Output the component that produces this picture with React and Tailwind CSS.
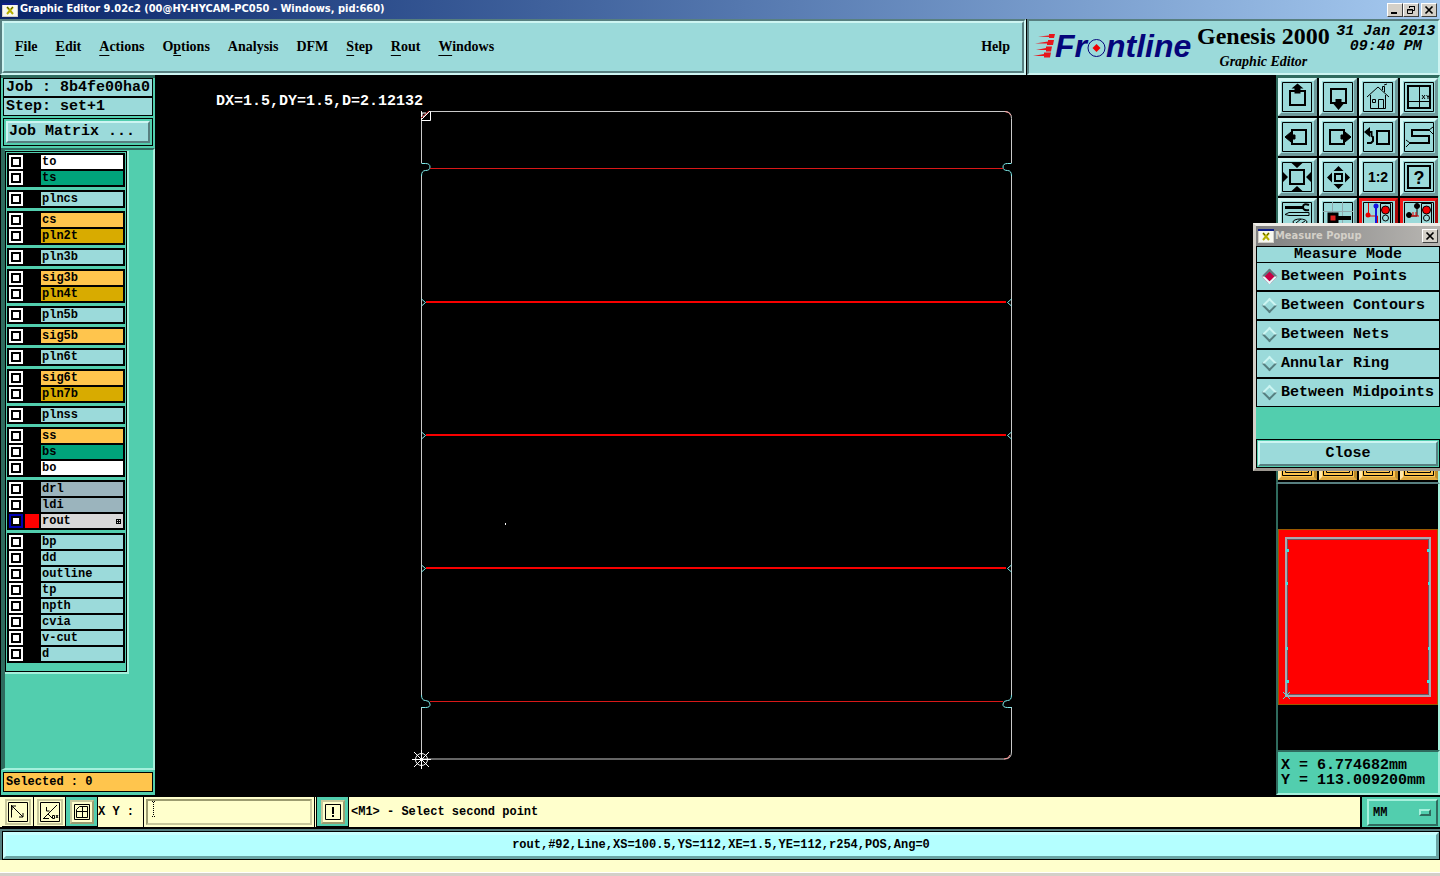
import { useState } from 'react'
import clsx from 'clsx'

const MENU = [
  ['', 'F', 'ile'],
  ['', 'E', 'dit'],
  ['', 'A', 'ctions'],
  ['O', 'p', 'tions'],
  ['Analysis', '', ''],
  ['DFM', '', ''],
  ['', 'S', 'tep'],
  ['', 'R', 'out'],
  ['', 'W', 'indows'],
]

const WHITE = 'bg-white'
const GREEN = 'bg-[#00a47b]'
const TEAL = 'bg-[#9bdada]'
const ORANGE = 'bg-[#ffc54d]'
const GOLD = 'bg-[#d8ab00]'
const SLATE = 'bg-[#9bb4bd]'
const GREY = 'bg-[#d8d8d8]'

const LAYER_GROUPS = [
  [['to', WHITE], ['ts', GREEN]],
  [['plncs', TEAL]],
  [['cs', ORANGE], ['pln2t', GOLD]],
  [['pln3b', TEAL]],
  [['sig3b', ORANGE], ['pln4t', GOLD]],
  [['pln5b', TEAL]],
  [['sig5b', ORANGE]],
  [['pln6t', TEAL]],
  [['sig6t', ORANGE], ['pln7b', GOLD]],
  [['plnss', TEAL]],
  [['ss', ORANGE], ['bs', GREEN], ['bo', WHITE]],
  [['drl', SLATE], ['ldi', SLATE], ['rout', GREY]],
  [['bp', TEAL], ['dd', TEAL], ['outline', TEAL], ['tp', TEAL], ['npth', TEAL], ['cvia', TEAL], ['v-cut', TEAL], ['d', TEAL]],
]

const MEASURE_MODES = ['Between Points', 'Between Contours', 'Between Nets', 'Annular Ring', 'Between Midpoints']

const raised = 'border-2 border-t-[#cdf5f2] border-l-[#cdf5f2] border-b-[#577f80] border-r-[#577f80]'
const sunken = 'border-2 border-t-[#577f80] border-l-[#577f80] border-b-[#cdf5f2] border-r-[#cdf5f2]'
const mono15 = "font-['Liberation_Mono',monospace] text-[15px] font-bold"
const mono12 = "font-['Liberation_Mono',monospace] text-[12px] font-bold"

function AppIcon() {
  return (
    <svg className="h-[14px] w-4 shrink-0" viewBox="0 0 16 14" shapeRendering="crispEdges">
      <rect width="16" height="14" fill="#d4d0c8" />
      <rect x="1" y="1" width="14" height="12" fill="#f8f8f0" />
      <rect width="16" height="2" fill="#10208a" />
      <path d="M5 4l6 7M11 4l-6 7" stroke="#b5b000" strokeWidth="2" shapeRendering="auto" />
      <path d="M5 4l2 2M11 4l-2 2" stroke="#565600" shapeRendering="auto" />
    </svg>
  )
}

function WinButton({ label, children }) {
  return (
    <button
      aria-label={label}
      className="flex h-[14px] w-4 items-center justify-center border border-t-white border-l-white border-b-[#404040] border-r-[#404040] bg-[#d4d0c8]"
    >
      <svg className="h-[10px] w-3" viewBox="0 0 12 10" fill="none" stroke="#000">{children}</svg>
    </button>
  )
}

const CloseGlyph = () => <path d="M2.5 1.5l7 7M9.5 1.5l-7 7" strokeWidth="1.7" />

function TitleBar() {
  return (
    <header className="flex h-[19px] items-center bg-linear-to-r from-[#0a246a] to-[#a6caf0] pl-[2px] pr-[3px]">
      <AppIcon />
      <h1 className="ml-[2px] flex-1 font-['DejaVu_Sans_Condensed','DejaVu_Sans',sans-serif] text-[11px] font-bold text-white whitespace-nowrap">
        Graphic Editor 9.02c2 (00@HY-HYCAM-PC050 - Windows, pid:660)
      </h1>
      <WinButton label="Minimize"><path d="M2 8h6" strokeWidth="2" /></WinButton>
      <WinButton label="Restore"><path d="M4.5 3V1.5h5v4H8M4 1.5h6M2.5 4.5h5v4h-5zM2 5h6" /></WinButton>
      <span className="w-[2px]" />
      <WinButton label="Close"><CloseGlyph /></WinButton>
    </header>
  )
}

function Logo() {
  return (
    <div className="flex items-center text-[#05057a]" aria-label="Frontline">
      <svg className="h-6 w-[22px] shrink-0" viewBox="0 0 22 24" fill="#e8161c">
        <path d="M5 2.500l11-1V0h6l-1 4h-5V3zM2 9.500l13-2V6h6l-1 5h-6V9.500zM3 16l10-2v-1.500h6l-1 5h-5V16zM0 22l11-2v-1.500h7l-1 5h-6V22z" />
      </svg>
      <span className="font-['Liberation_Sans',sans-serif] text-[32px] leading-8 font-bold italic">Fr</span>
      <svg className="h-5 w-[19px] mt-[3px] shrink-0" viewBox="0 0 19 20" fill="none">
        <circle cx="9.5" cy="10" r="8.5" stroke="#05057a" />
        <path d="M9.5 6l4 4-4 4-4-4z" fill="#f00000" />
      </svg>
      <span className="font-['Liberation_Sans',sans-serif] text-[32px] leading-8 font-bold italic">ntline</span>
    </div>
  )
}

function MenuBar() {
  return (
    <div className="flex h-14 font-['Liberation_Serif',serif]">
      <div className={clsx('flex flex-1 bg-[#9bdada]', sunken)}>
        <nav className={clsx('flex flex-1 items-center gap-[18px] pb-[2px] pl-[11px] pr-3 text-[14px] font-bold', raised)}>
          {MENU.map(([pre, key, post]) => (
            <button key={pre + key + post} className="whitespace-nowrap">
              {pre}<span className="underline underline-offset-4">{key}</span>{post}
            </button>
          ))}
          <button className="ml-auto">Help</button>
        </nav>
      </div>
      <div className={clsx('ml-px flex w-[413px] bg-[#9bdada] pl-1', sunken)}>
        <div className="flex items-center pb-[2px]"><Logo /></div>
        <div className="ml-1 w-[136px] shrink-0 text-center">
          <p className="text-[24px] leading-[30px] font-bold whitespace-nowrap">Genesis 2000</p>
          <p className="text-[14px] leading-[22px] font-bold italic">Graphic Editor</p>
        </div>
        <p className={clsx(mono15, 'flex-1 pt-[3px] pl-[2px] text-center leading-[15px] italic whitespace-nowrap')}>
          31 Jan 2013<br />09:40 PM
        </p>
      </div>
    </div>
  )
}

function LayerRow({ name, color }) {
  const active = name === 'rout'
  return (
    <li>
      <label className="flex h-4 items-center gap-[2px] px-[2px]">
        <input
          type="checkbox"
          className={clsx(
            'size-[14px] shrink-0 appearance-none border-2 bg-white shadow-[inset_0_0_0_2px_#000]',
            active ? 'border-[#0000b4]' : 'border-white',
          )}
        />
        <span className={clsx('size-[14px] shrink-0', active ? 'bg-[#ff0000]' : 'bg-black')} />
        <span className={clsx(mono12, 'flex h-[14px] flex-1 items-center pl-px leading-[14px]', color)}>
          {name}
          {active && (
            <svg className="ml-auto mr-[2px] size-[5px]" viewBox="0 0 5 5" shapeRendering="crispEdges" fill="none" stroke="#000">
              <path d="M.5.5h4v4h-4zM2.5 0v5M0 2.5h5" />
            </svg>
          )}
        </span>
      </label>
    </li>
  )
}

function Sidebar() {
  return (
    <aside className="mb-[2px] ml-px flex w-[154px] shrink-0 flex-col border-t-[3px] border-[#2f6b5e] bg-[#52ceae]">
      <div className={clsx(mono15, 'px-[2px]')}>
        <p className="h-[19px] border border-black bg-[#9bdada] pl-[2px] leading-[17px] whitespace-nowrap">Job : 8b4fe00ha0</p>
        <p className="h-[19px] border border-black bg-[#9bdada] pl-[2px] leading-[17px] whitespace-nowrap">Step: set+1</p>
        <div className="mt-[2px] border border-black p-[2px]">
          <button className={clsx('block h-[22px] w-full bg-[#9bdada] pl-px text-left leading-[18px] whitespace-nowrap', raised)}>
            Job Matrix ...
          </button>
        </div>
      </div>
      <div className="mt-[2px] flex-1 border-t-2 border-r-2 border-b-2 border-l-4 border-t-[#2f6b5e] border-l-[#2f6b5e] border-r-[#a5f0dc] border-b-[#a5f0dc]">
        <div className="mt-px w-[124px] border-r-2 border-b-2 border-[#a5f0dc]">
          <div className="space-y-[3px] border border-black px-px pt-px pb-2">
            {LAYER_GROUPS.map((group) => (
              <ul key={group[0][0]} className="bg-black py-px">
                {group.map(([name, color]) => <LayerRow key={name} name={name} color={color} />)}
              </ul>
            ))}
          </div>
        </div>
      </div>
      <div className="px-[2px] pt-[2px] pb-[3px]">
        <p className={clsx(mono12, 'h-5 border border-black bg-[#ffc54d] pl-[2px] leading-[18px]')}>Selected : 0</p>
      </div>
    </aside>
  )
}

function BoardCanvas() {
  return (
    <section className="relative min-w-0 flex-1 bg-black">
      <svg className="absolute inset-0 size-full" fill="none" stroke="#c9c9c9">
        <path d="M275 36.5h575q6.500 0 6.500 7v44.500M856.500 100v520M856.500 632v45q0 7-7 7H266.500v-52M266.500 620V100M266.500 88V36" />
        <g stroke="#7fecec">
          <path d="M266.500 88.500h4q4.500 0 4.500 3.500t-4.500 3.500q-4 0-4 5.500M856.500 88.500h-4q-4.500 0-4.500 3.500t4.500 3.500q4 0 4 5.500" />
          <path d="M266.500 620q0 5.500 4 5.500t4.500 3.500-4.500 3.500h-4M856.500 620q0 5.500-4 5.500t-4.500 3.500 4.500 3.500h4" />
          <path d="M266.500 224l4 3.500-4 3.500M266.500 357l4 3.500-4 3.500M266.500 490l4 3.500-4 3.500" />
          <path d="M856.500 224l-4 3.500 4 3.500M856.500 357l-4 3.500 4 3.500M856.500 490l-4 3.500 4 3.500" />
        </g>
        <g fill="#d81818" stroke="none">
          <rect x="275" y="93" width="573" height="1" />
          <rect x="275" y="626" width="573" height="1" />
        </g>
        <g fill="#f80000" stroke="none">
          <rect x="271" y="226" width="580" height="2" />
          <rect x="271" y="359" width="580" height="2" />
          <rect x="271" y="492" width="580" height="2" />
        </g>
        <path d="M850 36.500q4 0 6 4M849 684q5 0 6-4" stroke="#ff9a9a" />
        <path d="M266.500 36.500v9h9v-9M267 44l8-8M267 41v-3h4v2l-3 2" stroke="#fff" />
        <path d="M266 43l8-7" stroke="#c83232" />
        <g stroke="#fff">
          <circle cx="266.500" cy="684.500" r="6" />
          <path d="M257 684.500h19M266.500 675v19M259 677l15 15M274 677l-15 15" />
        </g>
        <rect x="350" y="448" width="1" height="2" fill="#fff" stroke="none" />
      </svg>
      <p className={clsx(mono15, 'absolute left-[61px] top-[19px] leading-4 text-white')}>DX=1.5,DY=1.5,D=2.12132</p>
    </section>
  )
}

const TOOLS = [
  ['Pan up', <><path d="M8 9h15v14H8z" strokeWidth="2" /><path d="M15.500 1.500l6 5h-3v5h-6v-5h-3z" fill="#000" stroke="none" /></>],
  ['Pan down', <><path d="M8 7h15v14H8z" strokeWidth="2" /><path d="M12.500 17h6v5h2l-5 6-5-6h2z" fill="#000" stroke="none" /></>],
  ['Home', <path d="M4 15L15 5l11 10M7.500 13v13.500h15V13M9.500 17.500h3v3h-3zM15.500 26v-8.500h5V26M19.500 8V4.500h2V10M21 3l3-1" />],
  ['Grid', <><path d="M4 4h22v22H4z" strokeWidth="2" /><path d="M15.500 3v24M4 19.500h23M18 13l3 4M21 13l-3 4M22.500 13l1.500 2 1.500-2M24 15v2" /></>],
  ['Pan left', <><path d="M10 8h14v14H10z" strokeWidth="2" /><path d="M3 15l6-5v3h4v4H9v3z" fill="#000" /></>],
  ['Pan right', <><path d="M7 8h14v14H7z" strokeWidth="2" /><path d="M28 15l-6-5v3h-4v4h4v3z" fill="#000" /></>],
  ['Previous view', <><path d="M14 9h12v13H14z" strokeWidth="2" /><path d="M5 10h3.500v4l1.500 1v4l-2 2H4" strokeWidth="2" /><path d="M1 10l6-5v10z" fill="#000" stroke="none" /></>],
  ['Serpentine', <><path d="M25 8H8v6h17v7H6" strokeWidth="2" /><path d="M25 8l4-3M25 8l4 4M6 21l-4-3M6 21l-4 4" /></>],
  ['Zoom out', <><path d="M8 8h14v14H8z" strokeWidth="2" /><path d="M9.500 1h11L15 6zM9.500 29h11L15 24zM1 10v10l5-5zM29 10v10l-5-5z" fill="#000" stroke="none" /></>],
  ['Zoom in', <><path d="M12 12h7v7h-7z" strokeWidth="2" /><path d="M10.500 9h10l-5-5zM10.500 22h10l-5 5zM9 10.500v10l-5-5zM22 10.500v10l5-5z" fill="#000" stroke="none" /></>],
  ['Scale', <text x="15" y="20" textAnchor="middle" fontSize="14" fontWeight="700" fontFamily="Liberation Sans, sans-serif" fill="#000" stroke="none">1:2</text>],
  ['Query', <><path d="M4 4h22v22H4z" strokeWidth="2" /><text x="15" y="22" textAnchor="middle" fontSize="18" fontWeight="700" fontFamily="Liberation Sans, sans-serif" fill="#000" stroke="none">?</text></>],
  ['Options', <><path d="M3 5.500h18" strokeWidth="3" /><path d="M27 3q-6-2-6 2t6 3" strokeWidth="2" /><path d="M3 12.500l4-2h20v3H7z" /><ellipse cx="18" cy="20" rx="7" ry="3" /><path d="M14 21l5-4M17 23l6-4" /></>],
  ['Measure', <><path d="M9.500 0v30M19.500 0v30M0 9.500h30" stroke="#8fa9ad" /><path d="M15 16h13" strokeWidth="4" /><path d="M6 12h8v8H6z" fill="#e02020" strokeWidth="3" /></>],
  ['Nets red', <><path d="M5.500 1v13h9v15" stroke="#e80000" /><path d="M13 3v27" stroke="#1414e0" strokeWidth="2" /><circle cx="13" cy="4" r="2.500" fill="#1414e0" stroke="none" /><circle cx="5" cy="13" r="2.500" fill="#e80000" stroke="none" /><path d="M17.500 1.500h10v27h-10z" /><circle cx="22.500" cy="8" r="4" fill="#f00000" /><circle cx="22.500" cy="16" r="3" /></>],
  ['Nets black', <><path d="M13 4v10H5" /><circle cx="13" cy="4" r="2.500" fill="#000" /><circle cx="5" cy="13" r="2.500" fill="#000" /><path d="M7 14h8M9 10v4M12 10v4" stroke="#e80000" /><path d="M17.500 1.500h10v27h-10z" /><circle cx="22.500" cy="8" r="4" fill="#f00000" /><circle cx="22.500" cy="16" r="3" /></>],
]

const EDIT_TOOLS = Array.from({ length: 24 }, (_, i) => [`Edit tool ${i + 1}`, <path d="M3.500 3.500h23v23h-23z" />])

function ToolButton({ label, tone, children }) {
  return (
    <button
      aria-label={label}
      className={clsx(
        'flex h-[38px] items-center justify-center border-[3px]',
        tone === 'view' && 'border-t-[#d2f7f4] border-l-[#d2f7f4] border-b-[#6f9a9b] border-r-[#6f9a9b] bg-[#9bdada]',
        tone === 'net' && 'border-t-[#f01818] border-l-[#f01818] border-b-[#a80c0c] border-r-[#a80c0c] bg-[#9bdada]',
        tone === 'edit' && 'border-t-[#ffe6a8] border-l-[#ffe6a8] border-b-[#e0aa40] border-r-[#b98a2a] bg-[#ffc54d]',
      )}
    >
      <svg className="size-[30px] shrink-0" viewBox="0 0 30 30" fill="none" stroke="#000">
        <path d="M.5.5h29v29H.5z" />
        {children}
      </svg>
    </button>
  )
}

function Preview() {
  return (
    <div className="flex flex-1 items-center border-l-2 border-r-2 border-l-[#2f6b5e] border-r-[#a5f0dc] bg-black">
      <svg className="h-44 w-full" viewBox="0 0 160 176" preserveAspectRatio="none" fill="none">
        <rect x=".5" y=".5" width="159" height="175" fill="#ff0000" stroke="#9a5a00" />
        <rect x="8" y="9" width="144" height="158" stroke="#a9a9b1" strokeWidth="2" />
        <path d="M9.500 10.500h141v155h-141z" stroke="#6d5560" />
        <g fill="#3fe0e0">
          <path d="M8 20h3v3H8zM149 20h3v3h-3zM8 53h2v3H8zM150 53h2v3h-2zM8 118h2v3H8zM150 118h2v3h-2zM8 151h3v3H8zM149 151h3v3h-3z" />
        </g>
        <path d="M5 163l7 7M12 163l-7 7" stroke="#3fe0e0" />
      </svg>
    </div>
  )
}

function ToolPanel() {
  return (
    <aside className="flex w-[164px] shrink-0 flex-col bg-black">
      <div className="space-y-[6px] border-2 border-t-[3px] border-t-[#2f6b5e] border-l-[#2f6b5e] border-r-[#a5f0dc] border-b-[#577f80] bg-black pb-[2px]">
        <div className="grid grid-cols-4 gap-[2px]">
          {TOOLS.map(([label, icon], i) => (
            <ToolButton key={label} label={label} tone={i > 13 ? 'net' : 'view'}>{icon}</ToolButton>
          ))}
        </div>
        <div className="grid grid-cols-4 gap-[2px]">
          {EDIT_TOOLS.map(([label, icon]) => (
            <ToolButton key={label} label={label} tone="edit">{icon}</ToolButton>
          ))}
        </div>
      </div>
      <Preview />
      <div className={clsx(mono15, 'mb-[2px] h-[45px] border-2 border-t-[#2f6b5e] border-l-[#2f6b5e] border-r-[#a5f0dc] border-b-[#a5f0dc] bg-[#52ceae] pt-[6px] pl-[3px] leading-[15px] whitespace-nowrap')}>
        <p>X = 6.774682mm</p>
        <p>Y = 113.009200mm</p>
      </div>
    </aside>
  )
}

function MeasurePopup() {
  const [mode, setMode] = useState(MEASURE_MODES[0])

  return (
    <div
      role="dialog"
      aria-label="Measure Popup"
      className="absolute right-0 top-[148px] w-[187px] border-[3px] border-r-0 border-t-[#efede8] border-l-[#d4d0c8] border-b-[#9c9890] bg-[#d4d0c8]"
    >
      <div className="flex h-5 items-center bg-linear-to-r from-[#808080] to-[#b8b6b2] px-[2px]">
        <AppIcon />
        <h2 className="ml-px flex-1 font-['DejaVu_Sans_Condensed','DejaVu_Sans',sans-serif] text-[11px] font-bold text-[#d4d0c8]">Measure Popup</h2>
        <WinButton label="Close popup"><CloseGlyph /></WinButton>
      </div>
      <fieldset aria-label="Measure Mode" className={clsx(mono15, 'border-x border-black bg-[#9bdada]')}>
        <p className="h-4 border-t border-black text-center leading-[15px]">Measure Mode</p>
        {MEASURE_MODES.map((m) => (
          <label key={m} className="flex h-[29px] items-center gap-[6px] border-t border-b border-black pl-[7px] leading-[15px] whitespace-nowrap">
            <input
              type="radio"
              name="measure-mode"
              checked={mode === m}
              onChange={() => setMode(m)}
              className="size-[11px] shrink-0 rotate-45 appearance-none border-2 border-t-[#cdf5f2] border-l-[#cdf5f2] border-b-[#577f80] border-r-[#577f80] checked:border-t-[#577f80] checked:border-l-[#577f80] checked:border-b-[#e6fbfa] checked:border-r-[#e6fbfa] checked:bg-[#c80046]"
            />
            {m}
          </label>
        ))}
      </fieldset>
      <div className="bg-[#52ceae] pt-8">
        <div className="border border-black p-px">
          <button className={clsx(mono15, 'block h-[25px] w-full bg-[#9bdada] leading-[20px]', raised)}>Close</button>
        </div>
      </div>
    </div>
  )
}

function PaleButton({ label, active, children }) {
  return (
    <button
      aria-label={label}
      className={clsx('flex w-8 shrink-0 items-center justify-center border-r border-b border-black', active ? 'bg-[#52ceae]' : 'bg-[#ffffcc]')}
    >
      <span className={clsx(
        'flex items-center justify-center border-2 bg-[#ffffcc]',
        active ? 'size-6 border-t-[#c8c89c] border-l-[#c8c89c] border-b-[#9c9c70] border-r-[#9c9c70]' : 'size-[26px] border-[#c8c89c]',
      )}>
        <svg className={active ? 'size-4' : 'size-5'} viewBox={active ? '0 0 16 16' : '0 0 20 20'} fill="none" stroke="#000">
          <path d={active ? 'M.5.5h15v15H.5z' : 'M.5.5h19v19H.5z'} />
          {children}
        </svg>
      </span>
    </button>
  )
}

function CommandBar() {
  return (
    <div className={clsx(mono12, 'flex h-8 border-b-2 border-black bg-[#ffffcc]')}>
      <span className="w-[2px]" />
      <PaleButton label="Distance"><path d="M3.500 3v12.500M4 4l11 11M4 8V4h4M15 11v4h-4" /></PaleButton>
      <PaleButton label="Angle"><path d="M3 16.500h6M3 17L17 3M6.500 5v4h3M8 12l4 4M12.500 13.500h2v3h-2zM16 13l2 3M18 13l-2 3" /></PaleButton>
      <PaleButton label="Snap grid" active><path d="M2.500 13.500v-8l3-3h8v11zM8.500 2v12M2 7.500h12" /></PaleButton>
      <label htmlFor="xy" className="w-[45px] shrink-0 self-center whitespace-nowrap">X Y :</label>
      <div className="flex w-[172px] shrink-0 border-x border-black p-[2px]">
        <div className="flex flex-1 border-2 border-t-[#9c9c70] border-l-[#9c9c70] border-b-[#c8c89c] border-r-[#c8c89c] pl-1">
          <svg className="h-4 w-[3px] shrink-0" viewBox="0 0 3 16" shapeRendering="crispEdges" stroke="#000">
            <path d="M0 .5h1M2 .5h1M1.500 1v14M0 15.500h1M2 15.500h1" strokeDasharray="1 1" />
          </svg>
          <input id="xy" type="text" className="min-w-0 flex-1 bg-[#ffffcc] outline-none" />
        </div>
      </div>
      <span className="w-[2px] border-r border-black" />
      <PaleButton label="Alert" active><path d="M8 3v7M8 11v2" strokeWidth="2" /></PaleButton>
      <p className="flex-1 self-center pl-[2px]">&lt;M1&gt; - Select second point</p>
      <div className="flex w-20 border-l-2 border-black bg-[#52ceae] pt-[2px] pb-px pl-[5px] pr-[2px]">
        <button className="flex flex-1 items-center justify-between border-2 border-t-[#a5f0dc] border-l-[#a5f0dc] border-b-[#2f6b5e] border-r-[#2f6b5e] pl-1 pr-[5px]">
          MM
          <span className="h-[7px] w-3 border-2 border-t-[#a5f0dc] border-l-[#a5f0dc] border-b-[#2f6b5e] border-r-[#2f6b5e]" />
        </button>
      </div>
    </div>
  )
}

export default function App() {
  return (
    <div className="flex min-h-screen flex-col overflow-hidden bg-black text-black">
      <TitleBar />
      <MenuBar />
      <main className="relative flex flex-1">
        <Sidebar />
        <BoardCanvas />
        <ToolPanel />
        <MeasurePopup />
      </main>
      <CommandBar />
      <footer className="bg-[#ffffcc]">
        <div className="border-t-2 border-l-2 border-[#577f80]">
          <div className="border border-black">
            <p className={clsx(mono12, 'h-[27px] border-[3px] border-t-[#c8ffff] border-l-[#c8ffff] border-b-[#6aa5a5] border-r-[#6aa5a5] bg-[#b4ffff] text-center leading-[21px]')}>
              rout,#92,Line,XS=100.5,YS=112,XE=1.5,YE=112,r254,POS,Ang=0
            </p>
          </div>
        </div>
        <div className="mt-3 h-[4px] border-t border-white bg-[#d4d0c8]" />
      </footer>
    </div>
  )
}
